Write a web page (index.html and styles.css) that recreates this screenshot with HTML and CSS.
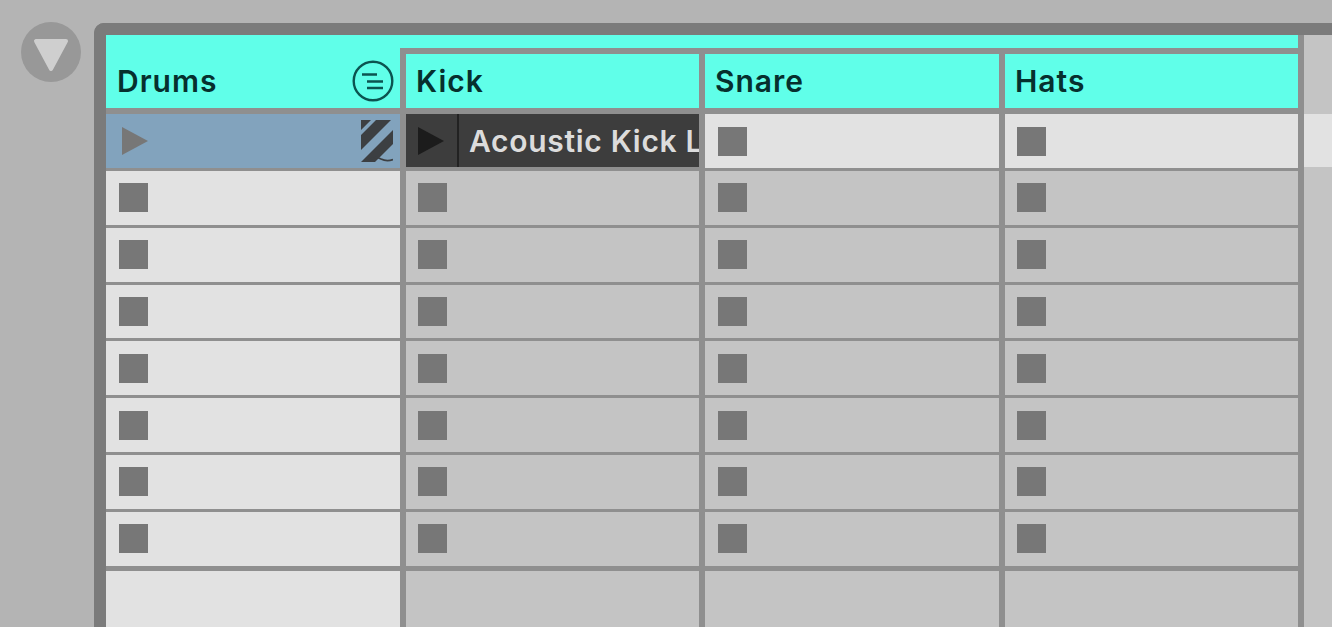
FILE: index.html
```html
<!DOCTYPE html>
<html lang="en">
<head>
    <meta charset="UTF-8">
    <meta name="viewport" content="width=device-width, initial-scale=1.0">
    <title>Drum Rack Group</title>
    <link rel="stylesheet" href="styles.css">
</head>
<body>
    <div class="fold">
        <svg width="60" height="60" viewBox="0 0 60 60">
            <circle cx="30" cy="30" r="30" fill="#989898"/>
            <path d="M15 19H45L30 47Z" fill="#cfcfcf" stroke="#cfcfcf" stroke-width="4" stroke-linejoin="round"/>
        </svg>
    </div>

    <div class="panel">
        <!-- titles -->
        <div class="titles">
            <div class="group-title">
                <span>Drums</span>
                <svg width="42" height="42" viewBox="0 0 42 42">
                    <circle cx="21" cy="21" r="19.3" fill="none" stroke="#0b5450" stroke-width="2.4"/>
                    <path d="M10 14.500H25M15 21.500H31M15 28H31" fill="none" stroke="#0b5450" stroke-width="2.6"/>
                </svg>
            </div>
            <div class="strip"></div>
            <div class="title">Kick</div>
            <div class="title">Snare</div>
            <div class="title">Hats</div>
            <div class="spare-title"></div>
        </div>

        <!-- clip slots -->
        <div class="slots">
            <div class="slot selected">
                <svg class="play" width="26" height="28" viewBox="0 0 26 28"><path d="M0 0L26 14L0 28Z" fill="#777"/></svg>
                <svg class="stripes" width="32" height="42" viewBox="0 0 32 42">
                    <path d="M0 0H10L0 10ZM15 0H30L0 30V15ZM32 10V24L14 42H0Z" fill="#3c3f42"/>
                    <path d="M8 40C13 37 17 37 20 39C24 41 28 41 32 39.500" fill="none" stroke="#3c3f42" stroke-width="1.800"/>
                </svg>
            </div>
            <div class="slot clip">
                <div class="clip-play"><svg width="26" height="28" viewBox="0 0 26 28"><path d="M0 0L26 14L0 28Z" fill="#1c1c1c"/></svg></div>
                <div class="clip-name">Acoustic Kick Loop</div>
            </div>
            <div class="slot light"><i></i></div>
            <div class="slot light"><i></i></div>
            <div class="spare light"></div>

            <div class="slot group"><i></i></div><div class="slot"><i></i></div><div class="slot"><i></i></div><div class="slot"><i></i></div><div class="spare"></div>
            <div class="slot group"><i></i></div><div class="slot"><i></i></div><div class="slot"><i></i></div><div class="slot"><i></i></div><div class="spare"></div>
            <div class="slot group"><i></i></div><div class="slot"><i></i></div><div class="slot"><i></i></div><div class="slot"><i></i></div><div class="spare"></div>
            <div class="slot group"><i></i></div><div class="slot"><i></i></div><div class="slot"><i></i></div><div class="slot"><i></i></div><div class="spare"></div>
            <div class="slot group"><i></i></div><div class="slot"><i></i></div><div class="slot"><i></i></div><div class="slot"><i></i></div><div class="spare"></div>
            <div class="slot group"><i></i></div><div class="slot"><i></i></div><div class="slot"><i></i></div><div class="slot"><i></i></div><div class="spare"></div>
            <div class="slot group"><i></i></div><div class="slot"><i></i></div><div class="slot"><i></i></div><div class="slot"><i></i></div><div class="spare"></div>

            <div class="slot group last"></div><div class="slot last"></div><div class="slot last"></div><div class="slot last"></div><div class="spare last"></div>
        </div>
    </div>
</body>
</html>
```

FILE: styles.css
```css
html, body {
    height: 100%;
}

body {
    margin: 0;
    display: flex;
    overflow: hidden;
    background-color: #b4b4b4;
    font-family: "Inter", sans-serif;
}

.fold {
    width: 94px;
    flex: none;
    padding: 22px 0 0 21px;
    box-sizing: border-box;
}

.fold svg {
    display: block;
}

.panel {
    flex: 1;
    margin-top: 23px;
    border-top: 12px solid #7b7b7b;
    border-left: 12px solid #7b7b7b;
    border-top-left-radius: 10px;
    background-color: #8f8f8f;
}

.titles,
.slots {
    display: grid;
    grid-template-columns: 294px 293px 294px 293px 1fr;
    column-gap: 6px;
}

.titles {
    grid-template-rows: 13px 54px;
    row-gap: 6px;
    margin-bottom: 6px;
}

.group-title {
    grid-column: 1;
    grid-row: 1 / 3;
    display: flex;
    align-items: flex-end;
    justify-content: space-between;
    padding: 0 6px 6px 11px;
    background-color: #60ffe9;
    color: #06302e;
    font-size: 30px;
    font-weight: 600;
    letter-spacing: 1px;
}

.group-title span {
    margin-bottom: 3px;
}

.strip {
    grid-column: 2 / 5;
    grid-row: 1;
    margin-left: -6px;
    background-color: #60ffe9;
}

.title {
    grid-row: 2;
    padding: 0 10px;
    background-color: #60ffe9;
    color: #06302e;
    font-size: 30px;
    font-weight: 600;
    letter-spacing: 1px;
    line-height: 54px;
}

.spare-title {
    grid-column: 5;
    grid-row: 1 / 3;
    margin-bottom: -6px;
    background-color: #c4c4c4;
}

.slots {
    grid-template-rows: 54px;
    grid-auto-rows: 53.8px;
    row-gap: 3px;
}

.slot {
    display: flex;
    align-items: center;
    padding: 0 12px;
    background-color: #c4c4c4;
}

/* snare column sits one pixel further in */
.slots > .slot:nth-child(5n+3) {
    padding-left: 13px;
}

.slot i {
    width: 29px;
    height: 29px;
    background-color: #777;
}

.slot.light {
    background-color: #e2e2e2;
}

.slot.group {
    padding-left: 13px;
    background-color: #e2e2e2;
}

.spare {
    margin-top: -4px;
    background-color: #c4c4c4;
}

.spare.light {
    margin-top: 0;
    background-color: #e2e2e2;
}

.slot.selected {
    justify-content: space-between;
    padding: 0 7px 0 16px;
    background-color: #82a3bd;
}

.slot.clip {
    margin-bottom: 1px;
    padding: 0;
    overflow: hidden;
    background-color: #3d3d3d;
    color: #dcdcdc;
}

.clip-play {
    display: flex;
    align-items: center;
    width: 53px;
    height: 100%;
    flex: none;
    padding-left: 12px;
    box-sizing: border-box;
    border-right: 2px solid #222;
}

.clip-name {
    padding-left: 10px;
    font-size: 30px;
    font-weight: 600;
    letter-spacing: 0.7px;
    white-space: nowrap;
}

.last {
    height: 80px;
}

.slot.last {
    margin-top: 2.4px;
}
```
